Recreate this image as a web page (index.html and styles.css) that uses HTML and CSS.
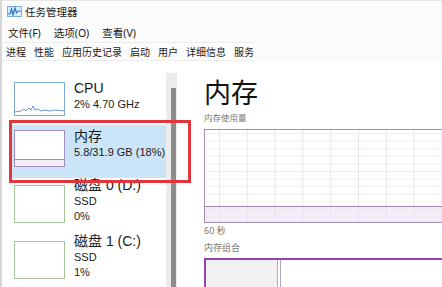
FILE: index.html
```html
<!DOCTYPE html>
<html lang="zh-CN">
<head>
  <meta charset="UTF-8" />
  <title>任务管理器</title>
  <link rel="stylesheet" href="styles.css">
</head>
<body>
  <div class="window">
    <div class="titlebar">
      <svg class="app-icon" width="15" height="11" viewBox="0 0 15 11">
        <rect x="0.5" y="0.5" width="14" height="10" fill="#dcecfa" stroke="#7fb0dc"/>
        <polyline points="1,8 3,8 4.5,3 6,9 8,2 9.5,7 11,5 14,5" fill="none" stroke="#2a78c8" stroke-width="1.2"/>
      </svg>
      <span>任务管理器</span>
    </div>

    <div class="menubar">
      <span>文件(F)</span>
      <span>选项(O)</span>
      <span>查看(V)</span>
    </div>

    <div class="tabs">
      <span>进程</span>
      <span>性能</span>
      <span>应用历史记录</span>
      <span>启动</span>
      <span>用户</span>
      <span>详细信息</span>
      <span>服务</span>
    </div>

    <div class="main">
      <div class="sidebar">
        <div class="list">
          <div class="item item-cpu">
            <div class="thumb thumb-cpu">
              <svg width="49" height="31" viewBox="0 0 49 31">
                <polyline points="0,29 6,28 9,26 11,28 14,25 16,27 18,23 20,27 23,26 26,28 30,27 34,28 40,27 49,28" fill="none" stroke="#3d7fc0" stroke-width="0.8"/>
              </svg>
            </div>
            <div class="info">
              <div class="name">CPU</div>
              <div class="sub">2% 4.70 GHz</div>
            </div>
          </div>

          <div class="item item-mem selected">
            <div class="thumb thumb-mem">
              <div class="mem-fill"></div>
            </div>
            <div class="info">
              <div class="name">内存</div>
              <div class="sub">5.8/31.9 GB (18%)</div>
            </div>
          </div>

          <div class="item item-disk">
            <div class="thumb thumb-disk"></div>
            <div class="info">
              <div class="name">磁盘 0 (D:)</div>
              <div class="sub">SSD</div>
              <div class="sub">0%</div>
            </div>
          </div>

          <div class="item item-disk">
            <div class="thumb thumb-disk"></div>
            <div class="info">
              <div class="name">磁盘 1 (C:)</div>
              <div class="sub">SSD</div>
              <div class="sub">1%</div>
            </div>
          </div>
        </div>

        <div class="scrolltrack">
          <div class="scrollthumb"></div>
        </div>

        <div class="highlight"></div>
      </div>

      <div class="content">
        <div class="title">内存</div>
        <div class="label">内存使用量</div>
        <div class="graph">
          <div class="graph-fill"></div>
        </div>
        <div class="label label-time">60 秒</div>
        <div class="label label-comp">内存组合</div>
        <div class="composition">
          <div class="comp-used"></div>
          <div class="comp-mark"></div>
        </div>
      </div>
    </div>
  </div>
</body>
</html>
```

FILE: styles.css
```css
* {
  box-sizing: border-box;
}

body {
  margin: 0;
  background: #fff;
  font-family: "Noto Sans", "Noto Sans CJK SC", sans-serif;
  color: #1a1a1a;
}

.window {
  width: 442px;
  height: 287px;
  overflow: hidden;
  background: #fbfbfb;
  border-left: 2px solid #d6d6d6;
}

.titlebar {
  height: 22px;
  display: flex;
  align-items: center;
  padding-left: 5px;
  font-size: 10.5px;
  border-top: 1px solid #e6e6e6;
}

.app-icon {
  margin-right: 3px;
}

.menubar {
  height: 20px;
  display: flex;
  align-items: center;
  gap: 13px;
  padding-left: 6px;
  font-size: 10.5px;
}

.tabs {
  width: 252px;
  height: 19px;
  display: flex;
  align-items: center;
  gap: 8px;
  padding-left: 4px;
  font-size: 10px;
  border-top: 1px solid #ececec;
  border-bottom: 1px solid #ececec;
  background: #fdfdfd;
}

.main {
  display: flex;
  height: 226px;
  background: #fff;
}

/* left list */
.sidebar {
  position: relative;
  width: 188px;
  flex-shrink: 0;
  display: flex;
  padding-left: 9px;
}

.list {
  width: 155px;
  padding-top: 16px;
}

.item {
  display: flex;
  align-items: flex-start;
}

.item-cpu {
  height: 48px;
  padding-top: 5px;
}

.item-mem {
  height: 53px;
  padding-top: 5px;
}

.item-disk {
  height: 56px;
  padding-top: 7px;
}

.selected {
  background: #cce4f7;
}

.thumb {
  width: 51px;
  height: 34px;
  margin-left: 3px;
  margin-right: 9px;
  background: #fff;
  flex-shrink: 0;
}

.thumb-cpu {
  border: 1px solid #7ea9d3;
}

.thumb-cpu svg {
  display: block;
}

.thumb-mem {
  height: 37px;
  border: 1px solid #a58cbd;
  display: flex;
  align-items: flex-end;
}

.mem-fill {
  width: 100%;
  height: 7px;
  border-top: 1px solid #a58cbd;
  background: #f4effa;
}

.thumb-disk {
  height: 38px;
  border: 1px solid #a7c59a;
}

.info {
  font-family: "Liberation Sans", "Noto Sans CJK SC", sans-serif;
  line-height: 1;
}

.name {
  font-size: 14px;
  line-height: 17px;
  margin-top: -2px;
}

.sub {
  font-size: 11px;
  line-height: 14px;
}

.sub + .sub {
  margin-top: 1px;
}

.item-disk .info {
  margin-top: -6px;
}

.scrolltrack {
  width: 11px;
  margin-top: 12px;
  background: #ececec;
  padding-top: 15px;
  padding-left: 5px;
}

.scrollthumb {
  width: 5px;
  height: 100%;
  background: #8c8c8c;
}

.highlight {
  position: absolute;
  left: 7px;
  top: 59px;
  width: 182px;
  height: 63px;
  border: 3px solid #e2363d;
}

/* right panel */
.content {
  flex: 1;
  min-width: 0;
  padding-left: 14px;
  padding-top: 18px;
}

.title {
  font-size: 27px;
  line-height: 27px;
  height: 35px;
  color: #111;
}

.label {
  font-size: 8.5px;
  color: #777;
  line-height: 1;
}

.graph {
  width: 260px;
  height: 94px;
  margin-top: 6px;
  border: 1px solid #a28fb2;
  background-color: #fff;
  background-image:
    linear-gradient(to right, #ebe4f0 1px, transparent 1px),
    linear-gradient(to bottom, #f2eef5 1px, transparent 1px);
  background-size: 27.8px 100%, 100% 7.6px;
  background-position: 14px 0, 0 3px;
  display: flex;
  align-items: flex-end;
}

.graph-fill {
  width: 100%;
  height: 16px;
  border-top: 1px solid #9a84ad;
  background: rgba(232, 222, 240, 0.55);
}

.label-time {
  margin-top: 3px;
  font-size: 9px;
}

.label-comp {
  margin-top: 8px;
  font-size: 9px;
}

.composition {
  width: 260px;
  height: 40px;
  margin-top: 6px;
  border: 2px solid #9442b8;
  display: flex;
}

.comp-used {
  width: 72px;
  background: #f1f0f2;
  border-right: 1px solid #b9a3c8;
}

.comp-mark {
  width: 3px;
  margin-left: 2px;
  border-left: 1px solid #b9a3c8;
}
```
